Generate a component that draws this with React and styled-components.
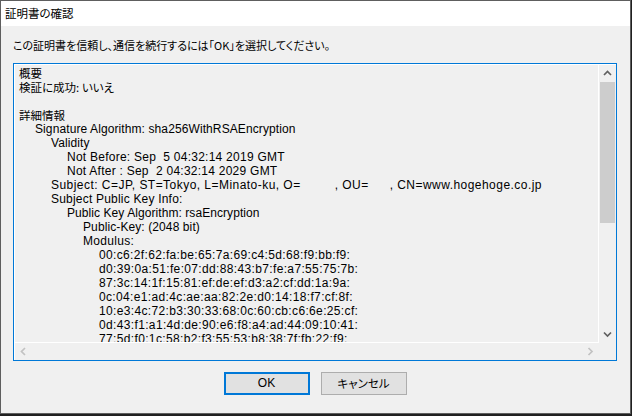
import React from 'react';
import styled, { createGlobalStyle, css } from 'styled-components';

const LATIN = `"Liberation Sans", Arial, "Noto Sans CJK JP", sans-serif`;
const JP = `"Noto Sans CJK JP", "Liberation Sans", sans-serif`;

const GlobalStyle = createGlobalStyle`
  html, body {
    margin: 0;
    padding: 0;
    background: #202020;
  }
  body {
    width: 632px;
    height: 416px;
    overflow: hidden;
    font-family: ${LATIN};
  }
`;

const Window = styled.div`
  width: 631px;
  height: 414px;
  box-sizing: border-box;
  border: 1px solid #5e5e5e;
  background: #f0f0f0;
  display: flex;
  flex-direction: column;
  color: #000;
`;

const TitleBar = styled.div`
  flex: none;
  height: 25px;
  box-sizing: border-box;
  padding: 0 0 1px 4px;
  display: flex;
  align-items: center;
  background: #ffffff;
  font-family: ${JP};
  font-size: 11.5px;
  font-feature-settings: "palt" 1;
`;

const Body = styled.div`
  flex: 1;
  display: flex;
  flex-direction: column;
  padding: 12px 13px 0 12px;
`;

const Instruction = styled.div`
  height: 14px;
  line-height: 14px;
  margin-bottom: 11px;
  white-space: nowrap;
  font-family: ${JP};
  font-size: 11px;
  font-feature-settings: "palt" 1;
`;

const TextBox = styled.div`
  flex: none;
  height: 298px;
  box-sizing: border-box;
  border: 1px solid #0078d7;
  display: flex;
`;

const Frame = styled.div`
  flex: 1;
  min-width: 0;
  min-height: 0;
  border-top: 1px solid #ffffff;
  border-left: 1px solid #ffffff;
  display: grid;
  grid-template-columns: 1fr 17px;
  grid-template-rows: 1fr 17px;
`;

const Content = styled.div`
  min-width: 0;
  min-height: 0;
  overflow: hidden;
  border-right: 1px solid #ffffff;
  border-bottom: 1px solid #ffffff;
  padding: 1px 0 0 4px;
  font-family: ${LATIN};
  font-size: 12px;
  line-height: 14px;
  white-space: pre;
`;

const Line = styled.div`
  height: 14px;
  line-height: 14px;
  padding-left: ${(p) => (p.$level || 0) * 16}px;
  letter-spacing: ${(p) => p.$track || 0}px;
  ${(p) =>
    p.$jp &&
    css`
      font-family: ${JP};
      font-size: 11.5px;
      font-feature-settings: "palt" 1;
    `}
`;

const Redact = styled.span`
  display: inline-block;
  width: ${(p) => p.$w}px;
`;

const VScroll = styled.div`
  display: flex;
  flex-direction: column;
`;

const HScroll = styled.div`
  display: flex;
  justify-content: space-between;
`;

const ArrowCell = styled.div`
  flex: none;
  width: 17px;
  height: 17px;
  display: flex;
  align-items: center;
  justify-content: center;
`;

const Thumb = styled.div`
  flex: none;
  height: 141px;
  margin: 0 1px;
  background: #cdcdcd;
`;

const Track = styled.div`
  flex: 1;
`;

const ButtonRow = styled.div`
  display: flex;
  justify-content: center;
  gap: 11px;
  margin-top: 11px;
`;

const Button = styled.button`
  width: 86px;
  height: 23px;
  box-sizing: border-box;
  margin: 0;
  padding: 0 0 1px;
  background: #e1e1e1;
  border: ${(p) => (p.$default ? '2px solid #0078d7' : '1px solid #adadad')};
  color: #000;
  font-family: ${(p) => (p.$jp ? JP : LATIN)};
  font-size: ${(p) => (p.$jp ? '11.5px' : '12px')};
  font-feature-settings: "palt" 1;
  cursor: default;
`;

const Chevron = ({ dir, color }) => {
  const pts = {
    up: '1,5 4.5,1.5 8,5',
    down: '1,1.5 4.5,5 8,1.5',
    left: '5,1 1.5,4.5 5,8',
    right: '1.5,1 5,4.5 1.5,8',
  }[dir];
  const vertical = dir === 'up' || dir === 'down';
  return (
    <svg
      width={vertical ? 9 : 7}
      height={vertical ? 7 : 9}
      viewBox={vertical ? '0 0 9 7' : '0 0 7 9'}
    >
      <polyline points={pts} fill="none" stroke={color} strokeWidth="1.7" />
    </svg>
  );
};

// only the rows that fit in the box; the last one is cut by the frame
const modulus = [
  '00:c6:2f:62:fa:be:65:7a:69:c4:5d:68:f9:bb:f9:',
  'd0:39:0a:51:fe:07:dd:88:43:b7:fe:a7:55:75:7b:',
  '87:3c:14:1f:15:81:ef:de:ef:d3:a2:cf:dd:1a:9a:',
  '0c:04:e1:ad:4c:ae:aa:82:2e:d0:14:18:f7:cf:8f:',
  '10:e3:4c:72:b3:30:33:68:0c:60:cb:c6:6e:25:cf:',
  '0d:43:f1:a1:4d:de:90:e6:f8:a4:ad:44:09:10:41:',
  '77:5d:f0:1c:58:b2:f3:55:53:b8:38:7f:fb:22:f9:',
];

const App = () => {
  return (
    <>
      <GlobalStyle />
      <Window>
        <TitleBar>証明書の確認</TitleBar>
        <Body>
          <Instruction>この証明書を信頼し、通信を続行するには「OK」を選択してください。</Instruction>
          <TextBox>
            <Frame>
              <Content>
                <Line $jp>概要</Line>
                <Line $jp>検証に成功: いいえ</Line>
                <Line />
                <Line $jp>詳細情報</Line>
                <Line $level={1} $track={0.1}>Signature Algorithm: sha256WithRSAEncryption</Line>
                <Line $level={2} $track={0.1}>Validity</Line>
                <Line $level={3} $track={0.25}>Not Before: Sep  5 04:32:14 2019 GMT</Line>
                <Line $level={3} $track={0.25}>Not After : Sep  2 04:32:14 2029 GMT</Line>
                <Line $level={2} $track={0.46}>
                  Subject: C=JP, ST=Tokyo, L=Minato-ku, O=<Redact $w={34} />, OU=
                  <Redact $w={21} />, CN=www.hogehoge.co.jp
                </Line>
                <Line $level={2} $track={0.2}>Subject Public Key Info:</Line>
                <Line $level={3} $track={0.07}>Public Key Algorithm: rsaEncryption</Line>
                <Line $level={4} $track={0.1}>Public-Key: (2048 bit)</Line>
                <Line $level={4} $track={0.3}>Modulus:</Line>
                {modulus.map((row) => (
                  <Line key={row} $level={5} $track={0.35}>
                    {row}
                  </Line>
                ))}
              </Content>
              <VScroll>
                <ArrowCell>
                  <Chevron dir="up" color="#606060" />
                </ArrowCell>
                <Thumb />
                <Track />
                <ArrowCell>
                  <Chevron dir="down" color="#606060" />
                </ArrowCell>
              </VScroll>
              <HScroll>
                <ArrowCell>
                  <Chevron dir="left" color="#c2c2c2" />
                </ArrowCell>
                <ArrowCell>
                  <Chevron dir="right" color="#c2c2c2" />
                </ArrowCell>
              </HScroll>
              <div />
            </Frame>
          </TextBox>
          <ButtonRow>
            <Button $default>OK</Button>
            <Button $jp>キャンセル</Button>
          </ButtonRow>
        </Body>
      </Window>
    </>
  );
};

export default App;
